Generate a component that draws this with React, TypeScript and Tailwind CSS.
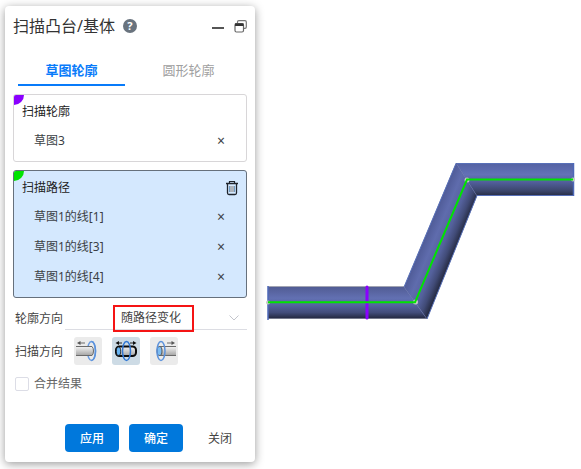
import React, { useState } from 'react';

type Tab = 'sketch' | 'circle';
type Direction = 'backward' | 'both' | 'forward';

interface PickBoxProps {
    title: string;
    items: string[];
    active?: boolean;
    cornerClass: string;
    onRemove: (item: string) => void;
    onClear?: () => void;
}

function TrashIcon() {
    return (
        <svg width="14" height="16" viewBox="0 0 14 16" fill="none" stroke="#1f242c">
            <path d="M1 3.5h12" strokeWidth="1.3" />
            <path d="M4.5 3V1.5h5V3" strokeWidth="1.2" />
            <path d="M2.5 4v9q0 1.5 1.5 1.5h6q1.5 0 1.5-1.5V4" strokeWidth="1.3" />
            <path d="M4.5 6v6M9.5 6v6" stroke="#6f9cc4" />
            <path d="M6 6v6M8 6v6" stroke="#8a8078" />
        </svg>
    );
}

function RestoreIcon() {
    return (
        <svg width="13" height="13" viewBox="0 0 13 13" fill="none">
            <path d="M3.5 3V2q0-1.3 1.3-1.3H11q1.3 0 1.3 1.3v5q0 1.3-1.3 1.3H9.5" stroke="#777" strokeWidth="1.2" />
            <rect x="1" y="3.5" width="8.5" height="8.5" rx="1.5" fill="#fff" stroke="#666" strokeWidth="1.2" />
            <path d="M1 4.7h8.5" stroke="#333" strokeWidth="2.6" />
        </svg>
    );
}

function DirectionIcon({ kind }: { kind: Direction }) {
    const fill = `url(#tube-${kind})`;
    return (
        <svg width="28" height="28" viewBox="0 0 28 28" fill="none">
            <defs>
                <linearGradient id={`tube-${kind}`} x1="0" y1="0" x2="0" y2="1">
                    <stop offset="0" stopColor="#f4f4f4" />
                    <stop offset="1" stopColor="#a4a4a4" />
                </linearGradient>
            </defs>
            {kind === 'backward' && (
                <>
                    <ellipse cx="17.5" cy="14" rx="4" ry="9.5" stroke="#6b9ce0" strokeWidth="1.5" />
                    <path d="M2 9.5h16q1.5 1.5 1.5 4.5t-1.5 4.5H2z" fill={fill} />
                    <path d="M2 9.5h16q1.5 1.5 1.5 4.5t-1.5 4.5H2" stroke="#6a6a6a" />
                    <path d="M17.500 4.500a4 9.500 0 0 1 0 19" stroke="#5b92dc" strokeWidth="1.5" />
                    <path d="M5 6h6" stroke="#6a6a6a" />
                    <path d="M3 6l3.500-2v4z" fill="#555" />
                </>
            )}
            {kind === 'both' && (
                <>
                    <rect x="4" y="9.5" width="20" height="9.500" rx="3.5" fill={fill} stroke="#0c0c0c" strokeWidth="2" />
                    <ellipse cx="6.5" cy="14.2" rx="2.2" ry="4.200" fill="#68b5f4" stroke="#0c0c0c" strokeWidth="0.8" />
                    <path d="M5 6h5M18 6h5" stroke="#222" />
                    <path d="M3.500 6l3.500-2v4zM24.500 6l-3.500-2v4z" fill="#111" />
                    <ellipse cx="14.5" cy="14" rx="4" ry="9.5" stroke="#3278d4" strokeWidth="1.5" />
                </>
            )}
            {kind === 'forward' && (
                <>
                    <path d="M9.500 9.500H26v9H9.500z" fill={fill} />
                    <path d="M26 9.500H9.500M26 18.500H9.500" stroke="#6a6a6a" />
                    <ellipse cx="9.5" cy="14" rx="2.5" ry="4.500" fill="#7cbcf2" stroke="#555" />
                    <path d="M17 6h6" stroke="#6a6a6a" />
                    <path d="M25 6l-3.500-2v4z" fill="#555" />
                    <ellipse cx="11" cy="14" rx="4" ry="9.5" stroke="#5b92dc" strokeWidth="1.5" />
                </>
            )}
        </svg>
    );
}

function PickBox({ title, items, active, cornerClass, onRemove, onClear }: PickBoxProps) {
    return (
        <section
            className={`relative overflow-hidden rounded-[3px] border pt-[3px] pb-[5px] ${
                active ? 'border-[#66707c] bg-[#d4e8fe]' : 'border-[#d8d6d8] bg-white'
            }`}
        >
            <span className={`absolute top-0 left-0 h-2.5 w-2.5 rounded-br-full ${cornerClass}`} />
            <div className="flex h-7 items-center justify-between pr-[7px] pl-2">
                <h2 className="text-xs text-[#222]">{title}</h2>
                {onClear && (
                    <button type="button" aria-label="清空" onClick={onClear}>
                        <TrashIcon />
                    </button>
                )}
            </div>
            <ul>
                {items.map((item) => (
                    <li key={item} className="flex h-[30px] items-center justify-between pr-5 pl-5 text-xs text-[#3b3f45]">
                        <span>{item}</span>
                        <button type="button" aria-label={`移除${item}`} className="w-2.5 text-sm" onClick={() => onRemove(item)}>
                            ×
                        </button>
                    </li>
                ))}
            </ul>
        </section>
    );
}

// Swept solid: two horizontal runs joined by a slanted one
function PipeModel() {
    return (
        <svg className="w-full" viewBox="255 144 326 181" fill="none">
            <defs>
                <linearGradient id="run-low" gradientUnits="userSpaceOnUse" x1="0" y1="287" x2="0" y2="319">
                    <stop offset="0" stopColor="#515c94" />
                    <stop offset="0.35" stopColor="#6270b2" />
                    <stop offset="0.55" stopColor="#5664a2" />
                    <stop offset="0.8" stopColor="#424c7a" />
                    <stop offset="1" stopColor="#20243a" />
                </linearGradient>
                <linearGradient id="run-high" gradientUnits="userSpaceOnUse" x1="0" y1="163" x2="0" y2="196">
                    <stop offset="0" stopColor="#5462a2" />
                    <stop offset="0.35" stopColor="#6371b6" />
                    <stop offset="0.6" stopColor="#505d98" />
                    <stop offset="0.85" stopColor="#3b456a" />
                    <stop offset="1" stopColor="#262b42" />
                </linearGradient>
                <linearGradient id="run-slant" gradientUnits="userSpaceOnUse" x1="404" y1="286" x2="435" y2="299">
                    <stop offset="0" stopColor="#4f5b97" />
                    <stop offset="0.3" stopColor="#5f6cad" />
                    <stop offset="0.6" stopColor="#54619c" />
                    <stop offset="0.8" stopColor="#414b77" />
                    <stop offset="1" stopColor="#23283e" />
                </linearGradient>
            </defs>
            <path d="M268 287H404L427 319H268z" fill="url(#run-low)" />
            <path d="M456 163H574V196H477z" fill="url(#run-high)" />
            <path d="M404 287L456 163L477 196L427 319z" fill="url(#run-slant)" />
            <path d="M268 286.5H404M268 318.5H427" stroke="#8a8da0" strokeWidth="0.8" />
            <path d="M404 287L456 163.5H574M427 319L477 195.5H574" stroke="#5870b8" />
            <path d="M268 286V320M573.5 163V196" stroke="#4e68b8" strokeWidth="1.5" />
            <path d="M404 287L427 319M456 163L477 196" stroke="#56639f" strokeWidth="0.6" />
            <g fill="#c4c8c4">
                <circle cx="268" cy="302.5" r="2" />
                <circle cx="415.5" cy="302" r="2.5" />
                <circle cx="467" cy="180" r="2.5" />
                <circle cx="573" cy="179.5" r="2" />
            </g>
            <path d="M367 287V318" stroke="#8a00ff" strokeWidth="3" strokeLinecap="round" />
            <path d="M268 302.3H415L467 179.6H573" stroke="#00e400" strokeWidth="2" />
        </svg>
    );
}

const directions: { kind: Direction; label: string }[] = [
    { kind: 'backward', label: '反向' },
    { kind: 'both', label: '双向' },
    { kind: 'forward', label: '正向' },
];

export default function App() {
    const [tab, setTab] = useState<Tab>('sketch');
    const [profiles, setProfiles] = useState(['草图3']);
    const [paths, setPaths] = useState(['草图1的线[1]', '草图1的线[3]', '草图1的线[4]']);
    const [direction, setDirection] = useState<Direction>('both');
    const [merge, setMerge] = useState(false);

    const tabClass = (name: Tab) =>
        `mx-[5px] flex-1 border-b-2 pb-1 text-[13px] leading-5 ${
            tab === name ? 'border-[#087bfa] font-bold text-[#087bfa]' : 'border-transparent text-[#a0a0a0]'
        }`;

    return (
        <div className="flex min-h-screen items-start bg-white py-1.5 pl-[5px] font-['Noto_Sans','Noto_Sans_CJK_SC',sans-serif]">
            <aside className="w-[250px] shrink-0 rounded bg-white px-2 pb-2.5 shadow-[0_2px_10px_rgba(0,0,0,0.4)]">
                <header className="flex h-10 items-center">
                    <h1 className="text-base text-[#333]">扫描凸台/基体</h1>
                    <button
                        type="button"
                        aria-label="帮助"
                        className="ml-2 h-3.5 w-3.5 rounded-full bg-[#69737e] text-center text-[11px] leading-[14px] font-bold text-white"
                    >
                        ?
                    </button>
                    <div className="ml-auto flex items-center gap-2.5">
                        <button type="button" aria-label="最小化" className="flex h-4 w-3 items-center">
                            <span className="mt-1 h-0.5 w-full bg-[#555]" />
                        </button>
                        <button type="button" aria-label="还原">
                            <RestoreIcon />
                        </button>
                    </div>
                </header>

                <nav className="mt-3.5 flex">
                    <button type="button" className={tabClass('sketch')} onClick={() => setTab('sketch')}>
                        草图轮廓
                    </button>
                    <button type="button" className={tabClass('circle')} onClick={() => setTab('circle')}>
                        圆形轮廓
                    </button>
                </nav>

                <div className="mt-2 flex flex-col gap-2">
                    <PickBox
                        title="扫描轮廓"
                        items={profiles}
                        cornerClass="bg-[#8a00ff]"
                        onRemove={(item) => setProfiles(profiles.filter((p) => p !== item))}
                    />
                    <PickBox
                        title="扫描路径"
                        items={paths}
                        active
                        cornerClass="bg-[#00e400]"
                        onRemove={(item) => setPaths(paths.filter((p) => p !== item))}
                        onClear={() => setPaths([])}
                    />
                </div>

                <div className="mt-2 flex h-6 items-center pl-0.5 text-xs text-[#444]">
                    <label htmlFor="orientation" className="w-[50px] shrink-0 pt-0.5">
                        轮廓方向
                    </label>
                    <div className="relative flex-1">
                        <select
                            id="orientation"
                            className="block h-6 w-full appearance-none border-b border-[#dcdde3] bg-transparent pr-2.5 text-center [text-align-last:center] text-xs text-[#444] outline-none"
                        >
                            <option>随路径变化</option>
                        </select>
                        <svg className="pointer-events-none absolute top-2 right-2" width="10" height="8" viewBox="0 0 10 8" fill="none">
                            <path d="M.5 1.5L5 6l4.5-4.5" stroke="#c3c5cc" />
                        </svg>
                        <span className="pointer-events-none absolute -top-px left-12 h-[27px] w-[81px] border-2 border-[#f51414]" />
                    </div>
                </div>

                <div className="mt-[7px] flex items-center pl-0.5 text-xs text-[#444]">
                    <span className="w-[59px] shrink-0 pt-0.5">扫描方向</span>
                    <div className="flex gap-2.5">
                        {directions.map(({ kind, label }) => (
                            <button
                                key={kind}
                                type="button"
                                aria-label={label}
                                aria-pressed={direction === kind}
                                onClick={() => setDirection(kind)}
                                className={`h-7 w-7 rounded-[3px] ${direction === kind ? 'bg-[#cddbe5]' : 'bg-[#ebebeb]'}`}
                            >
                                <DirectionIcon kind={kind} />
                            </button>
                        ))}
                    </div>
                </div>

                <label className="mt-2.5 flex h-[18px] items-center gap-[5px] pl-0.5 text-xs text-[#666]">
                    <input
                        type="checkbox"
                        checked={merge}
                        onChange={(e) => setMerge(e.target.checked)}
                        className="h-3.5 w-3.5 appearance-none rounded-xs border border-[#dcdde6] checked:bg-[#0078dc]"
                    />
                    合并结果
                </label>

                <footer className="mt-[31px] flex justify-end gap-2.5 text-xs">
                    <button type="button" className="h-7 w-[54px] rounded bg-[#0078dc] pt-0.5 font-medium text-white">
                        应用
                    </button>
                    <button type="button" className="h-7 w-[54px] rounded bg-[#0078dc] pt-0.5 font-medium text-white">
                        确定
                    </button>
                    <button type="button" className="h-7 w-[54px] rounded pt-0.5 text-[#444]">
                        关闭
                    </button>
                </footer>
            </aside>

            <main className="flex min-w-0 flex-1 self-center">
                <PipeModel />
            </main>
        </div>
    );
}
